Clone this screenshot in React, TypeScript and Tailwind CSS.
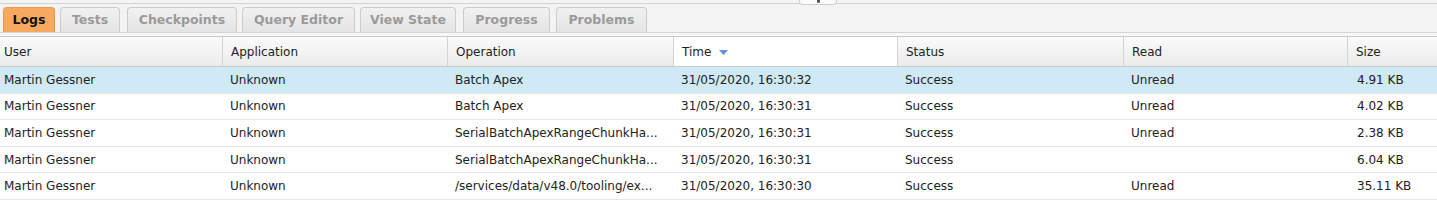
import { useState } from 'react';

const tabs = [
  { label: 'Logs', w: 'w-[52px]', ml: 'ml-[3px]' },
  { label: 'Tests', w: 'w-[60px]', ml: 'ml-[5px]' },
  { label: 'Checkpoints', w: 'w-[110px]', ml: 'ml-[7px]' },
  { label: 'Query Editor', w: 'w-[113px]', ml: 'ml-[5px]' },
  { label: 'View State', w: 'w-[96px]', ml: 'ml-[5px]' },
  { label: 'Progress', w: 'w-[87px]', ml: 'ml-[7px]' },
  { label: 'Problems', w: 'w-[91px]', ml: 'ml-[6px]' },
];

const columns = ['User', 'Application', 'Operation', 'Time', 'Status', 'Read', 'Size'];

const rows = [
  ['Martin Gessner', 'Unknown', 'Batch Apex', '31/05/2020, 16:30:32', 'Success', 'Unread', '4.91 KB'],
  ['Martin Gessner', 'Unknown', 'Batch Apex', '31/05/2020, 16:30:31', 'Success', 'Unread', '4.02 KB'],
  ['Martin Gessner', 'Unknown', 'SerialBatchApexRangeChunkHa...', '31/05/2020, 16:30:31', 'Success', 'Unread', '2.38 KB'],
  ['Martin Gessner', 'Unknown', 'SerialBatchApexRangeChunkHa...', '31/05/2020, 16:30:31', 'Success', '', '6.04 KB'],
  ['Martin Gessner', 'Unknown', '/services/data/v48.0/tooling/ex...', '31/05/2020, 16:30:30', 'Success', 'Unread', '35.11 KB'],
];

const grid = 'grid grid-cols-[222px_225px_226px_224px_226px_224px_1fr]';

export default function App() {
  const [active, setActive] = useState(0);
  const [selected, setSelected] = useState(0);

  return (
    <div className="relative w-[1437px] h-[203px] bg-white text-[12px] text-[#222] font-['DejaVu_Sans',Verdana,sans-serif] overflow-hidden">
      {/* drag handle */}
      <div className="absolute left-[799px] top-0 w-[38px] h-[5px] bg-[#fbfbfb] border border-t-0 border-[#cfcfcf] rounded-b-[4px] z-10 flex justify-center">
        <div className="w-[3px] h-[3px] bg-[#555] rounded-b-full" />
      </div>

      <div className="h-[3px] bg-[#f4f4f4]" />
      <div className="h-[1px] bg-[#d2d2d2]" />

      {/* tabs */}
      <div className="flex items-end h-[29px] bg-[#f3f3f3] border-b border-[#d4d4d4]">
        {tabs.map((t, i) => (
          <button
            key={t.label}
            onClick={() => setActive(i)}
            className={
              i === active
                ? `${t.w} ${t.ml} h-[25px] rounded-t-[4px] border border-b-0 border-[#e59a4f] bg-[#f7aa5f] font-bold text-[12.5px] text-[#111] flex items-center justify-center`
                : `${t.w} ${t.ml} h-[25px] rounded-t-[4px] border border-b-0 border-[#cbcbcb] bg-gradient-to-b from-[#f1f1f1] to-[#e4e4e4] font-bold text-[12.5px] text-[#9a9a9a] flex items-center justify-center`
            }
          >
            {t.label}
          </button>
        ))}
      </div>
      <div className="h-[4px] bg-[#f7f7f7] border-b border-[#c9c9c9]" />

      {/* header */}
      <div className={`${grid} h-[30px] border-b border-[#cccccc]`}>
        {columns.map((c, i) => (
          <div
            key={c}
            className={
              (c === 'Time'
                ? 'bg-white '
                : 'bg-gradient-to-b from-[#fbfbfb] to-[#ebebeb] ') +
              (i === 0 ? 'pl-[4px] ' : 'pl-[8px] border-l border-[#d3d3d3] ') +
              'flex items-center text-[#222]'
            }
          >
            {c}
            {c === 'Time' && (
              <svg width="9" height="5" viewBox="0 0 9 5" className="ml-[8px] mt-[1px]">
                <path d="M0 0 L9 0 L4.5 5 Z" fill="#5f93d8" />
              </svg>
            )}
          </div>
        ))}
      </div>

      {/* rows */}
      {rows.map((r, ri) => (
        <div
          key={ri}
          onClick={() => setSelected(ri)}
          className={`${grid} h-[26.6px] border-b border-[#e7e7e7] ${ri === selected ? 'bg-[#cfe9f5]' : 'bg-white'}`}
        >
          {r.map((v, ci) => (
            <div
              key={ci}
              className={(ci === 0 ? 'pl-[4px] ' : ci === 6 ? 'pl-[10px] ' : 'pl-[8px] ') + 'flex items-center whitespace-nowrap overflow-hidden'}
            >
              {v}
            </div>
          ))}
        </div>
      ))}
    </div>
  );
}
